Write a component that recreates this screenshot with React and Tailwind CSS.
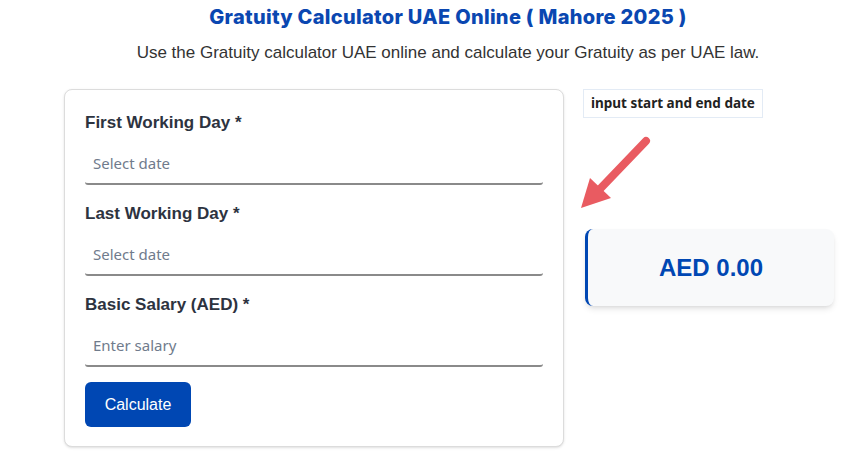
export default function App() {
  const fields = [
    { label: 'First Working Day *', placeholder: 'Select date' },
    { label: 'Last Working Day *', placeholder: 'Select date' },
    { label: 'Basic Salary (AED) *', placeholder: 'Enter salary' },
  ];

  return (
    <div className="w-[843px] h-[459px] overflow-hidden bg-white font-['Liberation_Sans',Arial,sans-serif]">
      {/* Header */}
      <div className="pl-[53px] text-center">
        <h1 className="pt-[5px] text-[20px] leading-[24px] tracking-[0.3px] font-extrabold text-[#0a47b1] font-['Inter',sans-serif]">
          Gratuity Calculator UAE Online ( Mahore 2025 )
        </h1>
        <p className="mt-[14px] text-[17px] leading-[20px] text-[#333]">
          Use the Gratuity calculator UAE online and calculate your Gratuity as per UAE law.
        </p>
      </div>

      <div className="flex pl-[64px] mt-[26px] gap-[19px]">
        {/* Form card */}
        <div className="w-[500px] h-[358px] rounded-lg border border-[#dcdcdc] shadow-sm px-[20px] pt-[23px] bg-white">
          {fields.map((f, i) => (
            <div key={i} className={i > 0 ? 'mt-[19px]' : ''}>
              <label className="block text-[17px] leading-[20px] font-bold text-[#2d3340]">{f.label}</label>
              <div className="mt-[10px] h-[42px] border-b-2 border-[#8a8a8a] rounded-b-[3px] flex items-center pl-[8px]">
                <span className="text-[15px] text-[#707b8c] font-['Noto_Sans',sans-serif]">{f.placeholder}</span>
              </div>
            </div>
          ))}
          <button className="mt-[15px] w-[106px] h-[45px] rounded-md bg-[#0047b3] text-white text-[16px]">
            Calculate
          </button>
        </div>

        {/* Right column */}
        <div className="w-[251px] flex flex-col items-start">
          <div className="h-[29px] px-[7px] border border-[#e3ebf5] flex items-center text-[13.5px] font-bold text-[#222] font-['Noto_Sans',sans-serif]">
            input start and end date
          </div>
          <svg width="80" height="80" viewBox="0 0 80 80" className="-ml-[8px] mt-[14px]">
            <line x1="71" y1="9" x2="24" y2="58" stroke="#e95b61" strokeWidth="8" strokeLinecap="round" />
            <polygon points="6,76 15,46 36,66" fill="#e95b61" />
          </svg>
          <div className="mt-[17px] ml-[2px] w-[249px] h-[77px] rounded-lg border-l-[3px] border-[#0047b3] bg-[#f8f9fa] shadow-md flex items-center justify-center">
            <span className="text-[24px] font-bold text-[#0047b3]">AED 0.00</span>
          </div>
        </div>
      </div>
    </div>
  );
}
